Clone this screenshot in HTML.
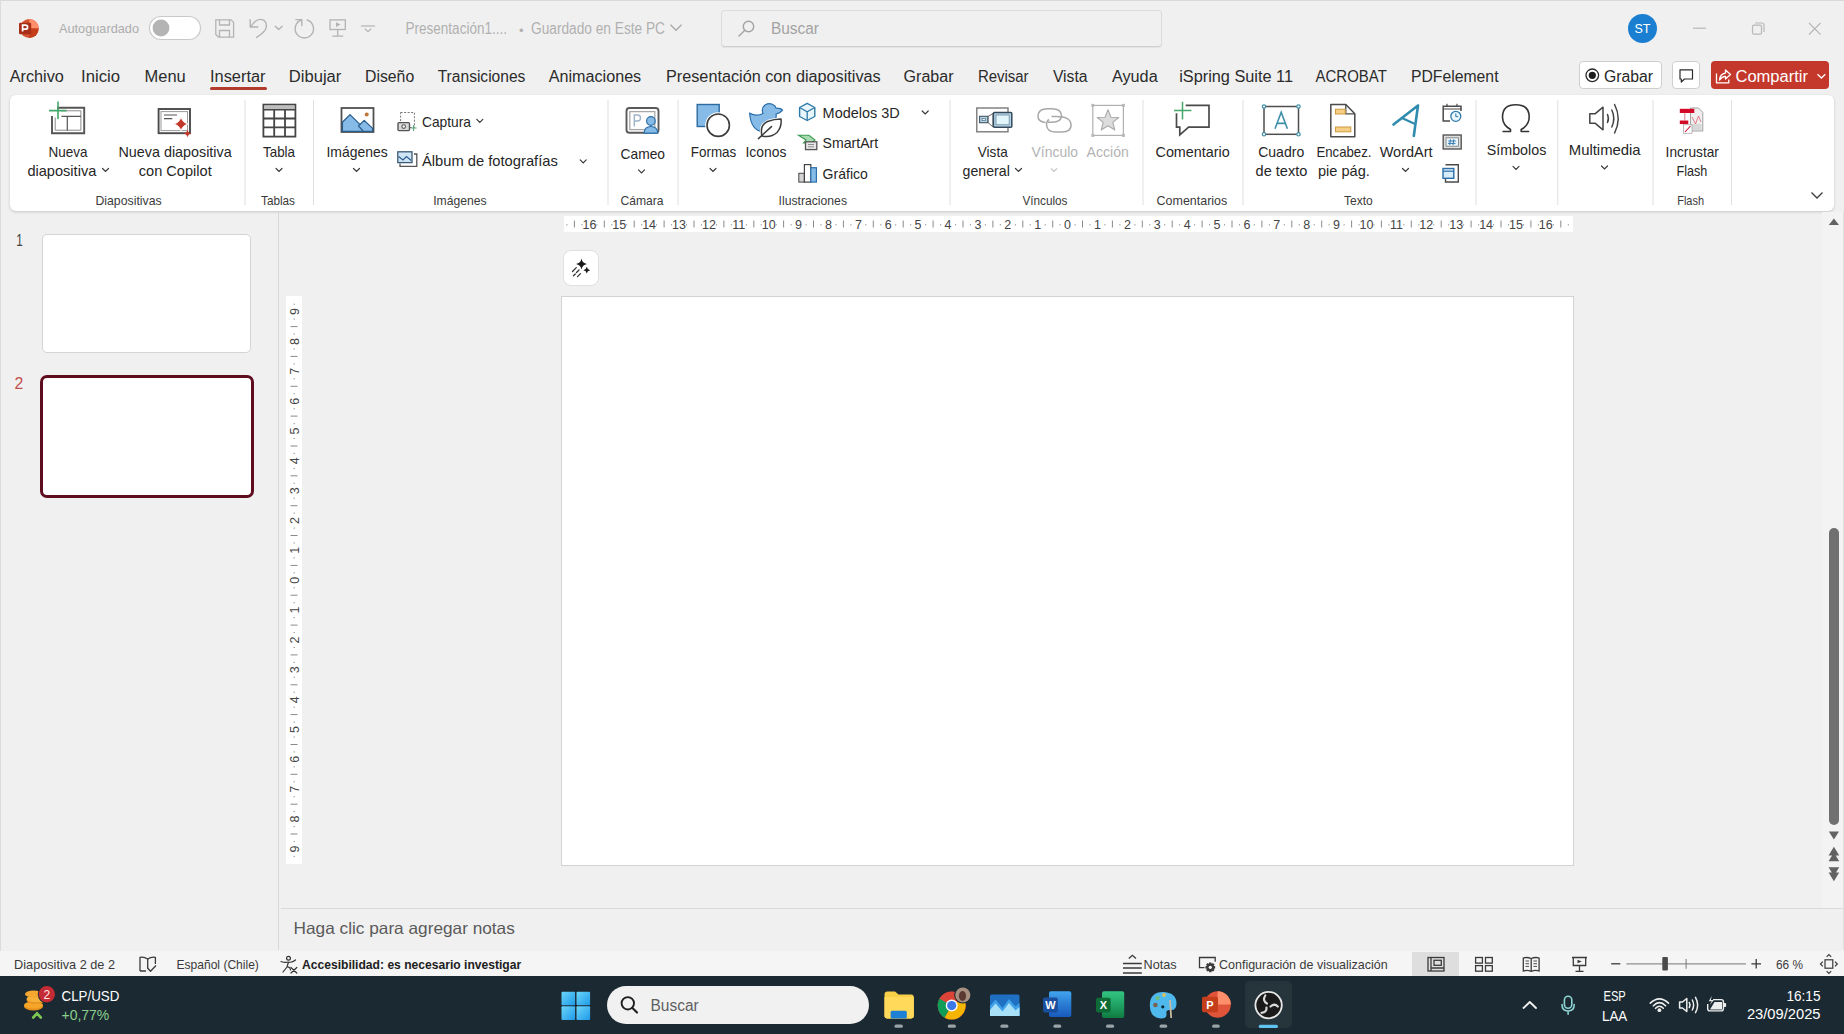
<!DOCTYPE html>
<html><head><meta charset="utf-8"><title>PowerPoint</title><style>
*{margin:0;padding:0;box-sizing:border-box}
html,body{width:1844px;height:1034px;overflow:hidden;background:#f0f0f0;font-family:"Liberation Sans",sans-serif}
.a{position:absolute}
#ov{position:absolute;left:0;top:0;width:1844px;height:1034px}
#ov text{font-family:"Liberation Sans",sans-serif}
</style></head>
<body>

<div class="a" style="left:0;top:0;width:1844px;height:1px;background:#d9d9d9"></div>
<div class="a" style="left:0;top:0;width:1px;height:976px;background:#dcdcdc"></div>
<div class="a" style="left:721px;top:10px;width:441px;height:37px;border:1px solid #dcdcdc;border-bottom-color:#cfcfcf;border-radius:4px;background:#f0f0f0;box-shadow:0 1px 1px rgba(0,0,0,.06)"></div>
<div class="a" style="left:1628px;top:14px;width:29px;height:29px;border-radius:50%;background:#1b7fd1"></div>
<div class="a" style="left:210px;top:87px;width:57px;height:3px;border-radius:2px;background:#b33b2e"></div>
<div class="a" style="left:1579px;top:61px;width:83px;height:28px;border:1px solid #cfcfcf;border-radius:4px;background:#fff"></div>
<div class="a" style="left:1672px;top:61px;width:28px;height:28px;border:1px solid #cfcfcf;border-radius:4px;background:#fff"></div>
<div class="a" style="left:1711px;top:61px;width:118px;height:28px;border-radius:4px;background:#c4382b"></div>
<div class="a" style="left:10px;top:95px;width:1824px;height:116px;border-radius:6px;background:#fff;box-shadow:0 1px 3px rgba(0,0,0,.18)"></div>
<div class="a" style="left:278px;top:212px;width:1px;height:738px;background:#d8d8d8"></div>
<div class="a" style="left:42px;top:234px;width:209px;height:119px;border:1px solid #d4d4d4;border-radius:5px;background:#fff"></div>
<div class="a" style="left:40px;top:375px;width:214px;height:123px;border:3px solid #5e0c1e;border-radius:7px;background:#fff"></div>
<div class="a" style="left:564px;top:216px;width:1009px;height:16px;background:#fff"></div>
<div class="a" style="left:286px;top:296px;width:16px;height:568px;background:#fff"></div>
<div class="a" style="left:563px;top:250px;width:36px;height:36px;border:1px solid #e0e0e0;border-radius:8px;background:#fff"></div>
<div class="a" style="left:561px;top:296px;width:1013px;height:570px;border:1px solid #d3d3d3;background:#fff"></div>
<div class="a" style="left:1822px;top:212px;width:21px;height:696px;background:#f3f3f3"></div>
<div class="a" style="left:1843px;top:212px;width:1px;height:738px;background:#e2e2e2"></div>
<div class="a" style="left:1829px;top:528px;width:10px;height:297px;border-radius:5px;background:#707070"></div>
<div class="a" style="left:281px;top:908px;width:1563px;height:1px;background:#dadada"></div>
<div class="a" style="left:0;top:951px;width:1844px;height:25px;background:#f5f5f5"></div>
<div class="a" style="left:1412px;top:952px;width:47px;height:24px;background:#dedede"></div>
<div class="a" style="left:0;top:976px;width:1844px;height:58px;background:#1b2a32"></div>
<div class="a" style="left:607px;top:986px;width:262px;height:38px;border-radius:19px;background:#f1f1f1"></div>
<div class="a" style="left:1245px;top:981px;width:47px;height:47px;border-radius:5px;background:#26343c"></div>

<svg id="ov" width="1844" height="1034" viewBox="0 0 1844 1034">

<!-- ppt logo -->
<circle cx="29.3" cy="28.5" r="9.4" fill="#d35230"/>
<path d="M29.3 19.1 A9.4 9.4 0 0 1 38.7 28.5 L29.3 28.5Z" fill="#ff8f6b"/>
<path d="M29.3 28.5 L38.7 28.5 A9.4 9.4 0 0 1 29.3 37.9Z" fill="#c43e1c"/>
<rect x="19" y="22.7" width="12.2" height="11.6" rx="1.2" fill="#a82e1a"/>
<path d="M22.6 31.6 V25.2 H25.4 Q27.6 25.2 27.6 27.2 Q27.6 29.2 25.4 29.2 H22.6" fill="none" stroke="#ffffff" stroke-width="1.7"/>
<!-- toggle -->
<rect x="149.5" y="16.5" width="51" height="23" rx="11.5" fill="#ffffff" stroke="#c9c9c9" stroke-width="1.2"/>
<circle cx="161" cy="28" r="8.4" fill="#b4b4b4"/>
<!-- save -->
<g fill="none" stroke="#b3b3b3" stroke-width="1.3">
<path d="M215.8 19.8 H231 L233.6 22.4 V37.2 H218.5 L215.8 34.5Z"/>
<path d="M219.5 19.8 V25 H229.5 V19.8"/>
<path d="M219.5 37.2 V30.5 H229.5 V37.2"/>
</g>
<!-- undo -->
<g fill="none" stroke="#b3b3b3" stroke-width="1.4" stroke-linecap="round" stroke-linejoin="round">
<path d="M250.2 19.8 V27 H257.8"/>
<path d="M250.8 26.6 Q255.5 19.3 260.5 19.4 Q266.4 19.8 266.4 26 Q266.4 31.5 256.5 37.4"/>
<path d="M275.2 26.2 L278.7 29.6 L282.2 26.2"/>
</g>
<!-- redo circle -->
<g fill="none" stroke="#b3b3b3" stroke-width="1.4" stroke-linecap="round" stroke-linejoin="round">
<path d="M301.5 20 A9.2 9.2 0 1 0 307.2 20"/>
<path d="M295.8 19.6 H301.8 V25.6"/>
</g>
<!-- present -->
<g fill="none" stroke="#b3b3b3" stroke-width="1.3">
<rect x="330" y="19.9" width="15.3" height="9.6" />
<path d="M337.7 29.5 V36 M332.3 36.2 H343.2"/>
</g>
<path d="M336 22.2 L340.5 24.6 L336 27Z" fill="#b3b3b3"/>
<!-- customize -->
<g fill="none" stroke="#b3b3b3" stroke-width="1.2">
<path d="M361 26 H375"/>
<path d="M364.8 28.6 L368 31.6 L371.2 28.6"/>
</g>
<!-- search icon -->
<g fill="none" stroke="#a3a3a3" stroke-width="1.4" stroke-linecap="round">
<circle cx="748.5" cy="26.5" r="5.2"/>
<path d="M744.8 30.3 L739 36"/>
</g>
<!-- title chevron -->
<path d="M670.5 24.8 L676 30.3 L681.5 24.8" fill="none" stroke="#a8a8a8" stroke-width="1.3"/>
<!-- window controls -->
<path d="M1693 28.2 H1706" stroke="#b8b8b8" stroke-width="1.2"/>
<g fill="none" stroke="#b8b8b8" stroke-width="1.2">
<rect x="1752.5" y="25.2" width="9" height="9" rx="1.5"/>
<path d="M1755 23 H1762 Q1764 23 1764 25 V32"/>
</g>
<path d="M1809 23 L1820.5 34.5 M1820.5 23 L1809 34.5" stroke="#b8b8b8" stroke-width="1.2"/>
<!-- grabar record -->
<circle cx="1592.3" cy="75.3" r="6.3" fill="none" stroke="#2b2b2b" stroke-width="1.3"/>
<circle cx="1592.3" cy="75.3" r="3.6" fill="#1e1e1e"/>
<!-- comment -->
<path d="M1680 69.8 H1692.5 V79 H1684.5 L1681.3 82 V79 H1680Z" fill="none" stroke="#2b2b2b" stroke-width="1.2" stroke-linejoin="round"/>
<!-- compartir icons -->
<g fill="none" stroke="#ffffff" stroke-width="1.3" stroke-linejoin="round">
<path d="M1716.5 73.5 V82.8 H1728.8 V79.5"/>
<path d="M1719.5 80 Q1720 74 1725.5 73 V70 L1730.5 74.5 L1725.5 79 V76.3 Q1722 76.5 1719.5 80Z"/>
<path d="M1817.5 74.2 L1821.4 78 L1825.3 74.2"/>
</g>

<!-- separators -->
<g fill="#e0e0e0">
<rect x="244.5" y="100" width="1" height="105"/>
<rect x="313" y="100" width="1" height="105"/>
<rect x="607.5" y="100" width="1" height="105"/>
<rect x="677.5" y="100" width="1" height="105"/>
<rect x="949.5" y="100" width="1" height="105"/>
<rect x="1142.5" y="100" width="1" height="105"/>
<rect x="1242.5" y="100" width="1" height="105"/>
<rect x="1475.5" y="100" width="1" height="105"/>
<rect x="1557.3" y="100" width="1" height="105"/>
<rect x="1652.5" y="100" width="1" height="105"/>
<rect x="1731" y="100" width="1" height="105"/>
</g>
<!-- chevrons (ribbon) -->
<g fill="none" stroke="#3a3a3a" stroke-width="1.2" stroke-linecap="round">
<path d="M102.5 168.5 L105.5 171.5 L108.5 168.5"/>
<path d="M276 168.5 L279 171.5 L282 168.5"/>
<path d="M353.5 168.5 L356.5 171.5 L359.5 168.5"/>
<path d="M476.8 119.3 L479.8 122.3 L482.8 119.3"/>
<path d="M580.2 159.8 L583.2 162.8 L586.2 159.8"/>
<path d="M638.5 169.8 L641.5 172.8 L644.5 169.8"/>
<path d="M710 168.5 L713 171.5 L716 168.5"/>
<path d="M922.2 111 L925.2 114 L928.2 111"/>
<path d="M1015.5 168.5 L1018.5 171.5 L1021.5 168.5"/>
<path d="M1402.5 168.5 L1405.5 171.5 L1408.5 168.5"/>
<path d="M1513 166.3 L1516 169.3 L1519 166.3"/>
<path d="M1601.5 166 L1604.5 169 L1607.5 166"/>
</g>
<path d="M1051 168.5 L1054 171.5 L1057 168.5" fill="none" stroke="#c4c4c4" stroke-width="1.2"/>
<path d="M1811.5 192.5 L1817 198 L1822.5 192.5" fill="none" stroke="#3a3a3a" stroke-width="1.3"/>

<!-- Nueva diapositiva -->
<g fill="none">
<path d="M58 109.6 V107.8 H84.2 V133.2 H52 V116" stroke="#555" stroke-width="1.9"/>
<path d="M61 110.8 H80.9 V130.2 H55.2 V117.5" stroke="#8a8a8a" stroke-width="1"/>
<path d="M61.5 116.4 H81 M67.3 116.4 V130.5" stroke="#555" stroke-width="1.2"/>
<path d="M58 101.5 V119 M49 110.6 H66.5" stroke="#44a86a" stroke-width="1.6"/>
</g>
<!-- Copilot new slide -->
<g fill="none">
<rect x="158.6" y="109" width="31.4" height="24.2" stroke="#4a4a4a" stroke-width="1.9"/>
<rect x="161" y="111.6" width="26.5" height="19" stroke="#9a9a9a" stroke-width="1"/>
<path d="M164 115 H177 M164 118.7 H172.3" stroke="#555" stroke-width="1.2"/>
</g>
<path d="M181 116.5 Q182.2 122.8 188.5 124 Q182.2 125.2 181 131.5 Q179.8 125.2 173.5 124 Q179.8 122.8 181 116.5Z" fill="#c0392b" stroke="#ffffff" stroke-width="0.9"/>
<path d="M187.5 129.6 Q188.1 133 191.5 133.6 Q188.1 134.2 187.5 137.6 Q186.9 134.2 183.5 133.6 Q186.9 133 187.5 129.6Z" fill="#c0392b"/>
<!-- Tabla -->
<g fill="none" stroke="#454545" stroke-width="1.8">
<rect x="263.4" y="104.6" width="32" height="32"/>
<path d="M263.4 109.6 H295.4 M263.4 118.5 H295.4 M263.4 127.3 H295.4 M274.2 109.6 V136.6 M285 109.6 V136.6"/>
</g>
<rect x="264.3" y="105.5" width="30.2" height="3.5" fill="#bdbdbd"/>
<!-- Imagenes -->
<rect x="341.5" y="108" width="32" height="24" fill="#ffffff" stroke="#505050" stroke-width="1.8"/>
<path d="M342.4 122.3 L350 114.6 L367 131.4 H342.4Z" fill="#86bbe8" stroke="#2b5d8c" stroke-width="1.3" stroke-linejoin="round"/>
<path d="M358.5 126 L364.2 120.4 L372.6 128.4 V131.4 H363.5Z" fill="#86bbe8" stroke="#2b5d8c" stroke-width="1.3" stroke-linejoin="round"/>
<circle cx="366.7" cy="114.6" r="2" fill="#c0773a"/>
<!-- Captura -->
<rect x="400.6" y="112.5" width="13.8" height="15" fill="none" stroke="#777" stroke-width="1" stroke-dasharray="2 1.5"/>
<rect x="398" y="122.6" width="11.5" height="8" rx="1" fill="#d9d9d9" stroke="#555" stroke-width="1.4"/>
<circle cx="403.7" cy="126.6" r="1.8" fill="#fff" stroke="#555" stroke-width="1.1"/>
<path d="M413.6 125 V131 M410.6 128 H416.6" stroke="#5aa67a" stroke-width="1.1"/>
<!-- Album -->
<path d="M400 163.5 V166.3 H416.8 V154 H414" fill="none" stroke="#555" stroke-width="1.3"/>
<rect x="397.8" y="151.8" width="14.2" height="10.8" fill="#cfe6f7" stroke="#3d5a74" stroke-width="1.3"/>
<path d="M398.6 156.5 L403 160 L406.5 156.5 L411.2 160.5" fill="none" stroke="#2b5d8c" stroke-width="1.2"/>
<!-- Cameo -->
<rect x="626.5" y="108" width="32" height="24.8" rx="3" fill="#fff" stroke="#5a5a5a" stroke-width="1.9"/>
<rect x="629.8" y="111.6" width="25" height="18" fill="#fff" stroke="#a8a8a8" stroke-width="1.3"/>
<path d="M634.3 126.5 V115 H637.5 Q640.5 115 640.5 118 Q640.5 121 637.5 121 H634.3" fill="none" stroke="#9fb3c8" stroke-width="1.4"/>
<circle cx="650.9" cy="121" r="4.3" fill="#86bbe8" stroke="#2b6fa8" stroke-width="1.2"/>
<path d="M644 133.2 Q644.5 126.5 650.9 126.5 Q657.3 126.5 657.8 133.2Z" fill="#86bbe8" stroke="#2b6fa8" stroke-width="1.2"/>
<!-- Formas -->
<rect x="697.2" y="104.5" width="22" height="22" fill="#86bbe8" stroke="#2c6aa0" stroke-width="1.4"/>
<circle cx="718.2" cy="125.2" r="13" fill="#ffffff"/>
<circle cx="718.2" cy="125.2" r="11.2" fill="#ffffff" stroke="#3c3c3c" stroke-width="1.6"/>
<!-- Iconos -->
<path d="M749.6 113 Q756 117 763 113.5 Q761 108 765 105 Q770.5 101.8 775 106 L776 108.2 Q781 108 782.5 110.2 Q780 113.5 776 114 Q777 118 774 121 L763 131.5 Q751 131 749.6 113Z" fill="#86bbe8" stroke="#2b6fa8" stroke-width="1.2" stroke-linejoin="round"/>
<path d="M762 136 Q759.5 125 767.5 121.5 Q774 119 781 119 Q782 127 777 132.5 Q771 138 762 136Z" fill="#ffffff" stroke="#ffffff" stroke-width="3"/>
<path d="M762 136 Q759.5 125 767.5 121.5 Q774 119 781 119 Q782 127 777 132.5 Q771 138 762 136Z" fill="#ffffff" stroke="#3c3c3c" stroke-width="1.5" stroke-linejoin="round"/>
<path d="M758.4 138.6 L771.5 126.6" stroke="#3c3c3c" stroke-width="1.5" stroke-linecap="round"/>
<!-- Modelos 3D -->
<g fill="#e8f5fb" stroke="#2e7aa6" stroke-width="1.4" stroke-linejoin="round">
<path d="M807.2 103.3 L814.8 107.5 V116.5 L807.2 120.5 L799.6 116.5 V107.5Z"/>
</g>
<path d="M799.6 107.5 L807.2 111.7 L814.8 107.5 M807.2 111.7 V120.5" fill="none" stroke="#2e7aa6" stroke-width="1.3"/>
<!-- SmartArt -->
<path d="M798.5 135.2 H809 L815 140 L811.5 143 H803.5 L806 140Z" fill="#a9dbb0" stroke="#3d9a55" stroke-width="1.1"/>
<rect x="805.5" y="141.8" width="11.3" height="7.8" fill="#e6e6e6" stroke="#555" stroke-width="1.3"/>
<path d="M808 144.5 H814 M808 146.8 H814" stroke="#777" stroke-width="0.8"/>
<!-- Grafico -->
<rect x="798.8" y="173.3" width="5.6" height="8.8" fill="#d4d4d4" stroke="#555" stroke-width="1.1"/>
<rect x="804.4" y="164.6" width="6.4" height="17.5" fill="#ffffff" stroke="#444" stroke-width="1.2"/>
<rect x="810.8" y="167.7" width="5.6" height="14.4" fill="#86bbe8" stroke="#2b6fa8" stroke-width="1.2"/>
<!-- Vista general -->
<rect x="976.8" y="108" width="31.2" height="23.8" fill="#fff" stroke="#7a7a7a" stroke-width="1.4"/>
<path d="M988 116.5 L993 113.5 V127 L988 122.5Z" fill="#fff" stroke="#666" stroke-width="1"/>
<rect x="979.6" y="116.3" width="8.2" height="6.4" fill="#b8d6ea" stroke="#3f5566" stroke-width="1.1"/>
<rect x="982" y="118.3" width="3.5" height="2.4" fill="#e6f2fa" stroke="#3f5566" stroke-width="0.6"/>
<rect x="993.4" y="112.6" width="18.4" height="14.6" rx="1" fill="#b8d6ea" stroke="#34495a" stroke-width="1.5"/>
<rect x="996" y="115" width="13.2" height="9.8" fill="#e3f6fc" stroke="#6a8aa0" stroke-width="0.8"/>
<!-- Vinculo (disabled) -->
<g fill="none" stroke="#a9a9a9" stroke-width="1.5">
<path d="M1045.5 122.5 Q1037.5 121.5 1038 115.5 Q1038.5 108.8 1047.5 108.8 H1052 Q1061 108.8 1061.5 115.5 Q1061.5 122.2 1052 122.2 H1048"/>
<path d="M1051.5 116.5 H1056.5 Q1070.5 116.5 1071 124.5 Q1071.5 132 1062 132 H1056 Q1047 132 1046.5 125 Q1046.5 121 1049 119.5"/>
</g>
<!-- Accion (disabled) -->
<rect x="1092.8" y="105.4" width="30.6" height="30" fill="none" stroke="#b0b0b0" stroke-width="1.2"/>
<g fill="#b8b8b8"><rect x="1091.3" y="103.9" width="3" height="3"/><rect x="1121.9" y="103.9" width="3" height="3"/><rect x="1091.3" y="133.9" width="3" height="3"/><rect x="1121.9" y="133.9" width="3" height="3"/></g>
<path d="M1108 109.8 L1111 117.2 L1118.8 117.5 L1112.8 122.4 L1114.8 130 L1108 125.8 L1101.2 130 L1103.2 122.4 L1097.2 117.5 L1105 117.2Z" fill="#dcdcdc" stroke="#ababab" stroke-width="1.1" stroke-linejoin="round"/>
<!-- Comentario -->
<path d="M1185.7 105.4 H1209 V127.2 H1188.6 L1179.8 134.8 V127.2 H1176.5 V113.2" fill="none" stroke="#4a4a4a" stroke-width="1.7" stroke-linejoin="miter"/>
<path d="M1182.5 101.8 V119.6 M1174 110.4 H1191.4" stroke="#45a86a" stroke-width="1.5"/>
<!-- Cuadro de texto -->
<rect x="1264" y="106.5" width="34.5" height="27.8" fill="#fff" stroke="#4e4e4e" stroke-width="1.5"/>
<g fill="#fff" stroke="#3e8fa8" stroke-width="1.2"><circle cx="1264" cy="106.5" r="1.7"/><circle cx="1298.5" cy="106.5" r="1.7"/><circle cx="1264" cy="134.3" r="1.7"/><circle cx="1298.5" cy="134.3" r="1.7"/></g>
<path d="M1275 128.8 L1281.2 112.3 L1287.4 128.8 M1277.2 123.4 H1285.2" fill="none" stroke="#3e8fa8" stroke-width="1.6"/>
<!-- Encabez -->
<path d="M1330.8 104.6 H1345.8 L1354.8 113.8 V136.8 H1330.8Z" fill="#fff" stroke="#4a4a4a" stroke-width="1.5" stroke-linejoin="round"/>
<path d="M1345.8 104.6 V113.8 H1354.8" fill="none" stroke="#4a4a4a" stroke-width="1.3"/>
<rect x="1335.5" y="109.2" width="9.7" height="4.8" fill="#f6cf86" stroke="#cf9b3e" stroke-width="1"/>
<rect x="1335.5" y="127" width="15.3" height="4.8" fill="#f6cf86" stroke="#cf9b3e" stroke-width="1"/>
<!-- WordArt -->
<path d="M1393.5 124.5 L1418 105.5 L1413.8 136" fill="none" stroke="#2f8cae" stroke-width="2.6" stroke-linecap="round" stroke-linejoin="round"/>
<path d="M1402 118 L1414.4 123.8" fill="none" stroke="#2f8cae" stroke-width="2.2"/>
<!-- date/time -->
<path d="M1450 121 H1443.2 V106.3 H1461 V111" fill="none" stroke="#4a4a4a" stroke-width="1.5"/>
<path d="M1443.2 109 H1461 M1447 103.8 V107 M1457 103.8 V107" stroke="#4a4a4a" stroke-width="1.2"/>
<circle cx="1455.8" cy="116.3" r="5" fill="#e8f5fb" stroke="#2e7aa6" stroke-width="1.3"/>
<path d="M1455.8 113.5 V116.6 H1458.2" fill="none" stroke="#2e7aa6" stroke-width="1"/>
<!-- slide number -->
<rect x="1443.2" y="135" width="18" height="14" fill="#dedede" stroke="#555" stroke-width="1.4"/>
<rect x="1446" y="137.8" width="12.4" height="8.4" fill="#e6f4fb" stroke="#777" stroke-width="0.8"/>
<path d="M1450.5 139.3 L1449.7 145 M1453.8 139.3 L1453 145 M1448.3 141 H1455.8 M1448 143.4 H1455.5" stroke="#2b6fa8" stroke-width="0.9"/>
<!-- object -->
<path d="M1445.5 164.8 H1458.3 V182 H1445.5 V177" fill="none" stroke="#4a4a4a" stroke-width="1.4"/>
<rect x="1443" y="168.5" width="10.8" height="9.8" fill="#d6ecfa" stroke="#2b6fa8" stroke-width="1.4"/>
<path d="M1443 171.2 H1453.8" stroke="#2b6fa8" stroke-width="1.2"/>
<!-- Omega -->
<path d="M1502.5 131.5 H1510.5 V129.5 Q1502.5 125 1502.5 117 Q1502.5 104.8 1515.8 104.8 Q1529.2 104.8 1529.2 117 Q1529.2 125 1521.2 129.5 V131.5 H1529.2" fill="none" stroke="#333" stroke-width="1.6" stroke-linejoin="round"/>
<!-- Multimedia speaker -->
<path d="M1589.8 113.8 H1595 L1603 107.2 V129.8 L1595 123.2 H1589.8Z" fill="none" stroke="#444" stroke-width="1.5" stroke-linejoin="round"/>
<path d="M1607.5 114.5 Q1609.3 118.5 1607.5 122.5 M1611.8 110 Q1615.8 118.5 1611.8 127 M1614.6 104.5 Q1621.8 118.5 1614.6 133" fill="none" stroke="#444" stroke-width="1.5" stroke-linecap="round"/>
<!-- Flash icon -->
<path d="M1690.5 108 H1698.5 L1702.8 112.3 V131 H1690.5Z" fill="#efefef" stroke="#999" stroke-width="0.9"/>
<path d="M1692 117 L1695.5 124 L1698.5 116 L1701 122" fill="none" stroke="#e06070" stroke-width="0.8"/>
<rect x="1691" y="124" width="10.5" height="6" fill="#d8d8d8"/>
<rect x="1679.8" y="108.8" width="14.5" height="4.2" fill="#d20a28"/>
<rect x="1679.8" y="120.5" width="8.5" height="3.6" fill="#d20a28"/>
<path d="M1684.8 113 V120.5" stroke="#c05060" stroke-width="0.7"/>
<rect x="1683.5" y="124.8" width="8.5" height="8.5" fill="#fff" stroke="#a0a0a0" stroke-width="0.7"/>
<path d="M1685 132 L1690.5 126" stroke="#d20a28" stroke-width="1.1"/>

<!-- designer sparkles -->
<path d="M581.5 258.5 Q582.3 263.2 587 264 Q582.3 264.8 581.5 269.5 Q580.7 264.8 576 264 Q580.7 263.2 581.5 258.5Z" fill="#1a1a1a"/>
<path d="M586.8 266.8 Q587.3 269.7 590.2 270.2 Q587.3 270.7 586.8 273.6 Q586.3 270.7 583.4 270.2 Q586.3 269.7 586.8 266.8Z" fill="#1a1a1a"/>
<g stroke="#333" stroke-width="1.3" stroke-linecap="round">
<path d="M572.5 271.5 L576.3 267.6 M576.5 272.5 L579 270 M573.5 275.8 L575.3 274 M577.5 276.6 L580.5 273.6"/>
</g>
<!-- scrollbar arrows -->
<g fill="#626262">
<path d="M1828.8 225 L1833.9 218.5 L1839 225Z"/>
<path d="M1828.8 831.6 H1839 L1833.9 839.4Z"/>
<path d="M1833.9 846.7 L1839.2 855.6 H1828.6Z M1833.9 852.4 L1839.2 861.3 H1828.6Z"/>
<path d="M1828.6 867.2 H1839.2 L1833.9 876.1Z M1828.6 872.5 H1839.2 L1833.9 881.3Z"/>
</g>
<!-- status bar icons -->
<g fill="none" stroke="#3a3a3a" stroke-width="1.3" stroke-linejoin="round">
<path d="M140 971 V957.3 Q144 956.5 147.7 959 Q151.4 956.5 155.4 957.3 V964"/>
<path d="M147.7 959 V968.5 M140 971 H146"/>
<path d="M147.5 968 L150.5 971.3 L156 965.5"/>
</g>
<g fill="none" stroke="#333" stroke-width="1.2" stroke-linecap="round" stroke-linejoin="round">
<circle cx="288.5" cy="958.3" r="1.9"/>
<path d="M281 961.5 Q285 963 288.5 962 Q292 963 295.5 960 M288.5 962 L287 967 L283 972 M287 967 Q290 966.5 290.5 970"/>
<path d="M291 967.5 L296.8 973 M296.8 967.5 L291 973"/>
</g>
<g fill="none" stroke="#3a3a3a" stroke-width="1.3">
<path d="M1128.8 958.6 L1132.4 955.3 L1136 958.6" />
<path d="M1123 963.5 H1141.8 M1123 968 H1141.8 M1123 973 H1141.8"/>
</g>
<path d="M1204.5 967.6 H1199.5 V957.5 H1215.2 V961.8" fill="none" stroke="#3a3a3a" stroke-width="1.3"/>
<path d="M1215.18 966.21 L1215.18 968.39 L1213.59 968.77 L1213.66 968.59 L1214.52 969.98 L1212.98 971.52 L1211.59 970.66 L1211.77 970.59 L1211.39 972.18 L1209.21 972.18 L1208.83 970.59 L1209.01 970.66 L1207.62 971.52 L1206.08 969.98 L1206.94 968.59 L1207.01 968.77 L1205.42 968.39 L1205.42 966.21 L1207.01 965.83 L1206.94 966.01 L1206.08 964.62 L1207.62 963.08 L1209.01 963.94 L1208.83 964.01 L1209.21 962.42 L1211.39 962.42 L1211.77 964.01 L1211.59 963.94 L1212.98 963.08 L1214.52 964.62 L1213.66 966.01 L1213.59 965.83Z" fill="#3a3a3a"/>
<circle cx="1210.3" cy="967.3" r="1.6" fill="#f5f5f5"/>
<!-- view buttons -->
<g fill="none" stroke="#3a3a3a" stroke-width="1.3">
<rect x="1428" y="957.5" width="16" height="13.5"/>
<path d="M1431 957.5 V971 M1431 968 H1444"/>
<rect x="1434" y="960.3" width="7.3" height="5"/>
<rect x="1475.6" y="957.5" width="6.8" height="5.6"/><rect x="1485.5" y="957.5" width="6.8" height="5.6"/>
<rect x="1475.6" y="965.6" width="6.8" height="5.6"/><rect x="1485.5" y="965.6" width="6.8" height="5.6"/>
<path d="M1523.3 958 Q1527 956.8 1531.2 958.5 Q1535.4 956.8 1539.1 958 V971 Q1535.4 969.8 1531.2 971.3 Q1527 969.8 1523.3 971Z M1531.2 958.5 V971.3"/>
<path d="M1525.5 961 H1529 M1525.5 963.7 H1529 M1525.5 966.4 H1529 M1533.4 961 H1537 M1533.4 963.7 H1537 M1533.4 966.4 H1537" stroke-width="0.9"/>
<path d="M1572 957.5 H1587 M1573.3 957.5 V965.5 H1585.7 V957.5 M1579.5 965.5 V971 M1575.5 971.3 H1583.5"/>
</g>
<path d="M1577.5 959.8 L1581.8 961.5 L1577.5 963.3Z" fill="#3a3a3a"/>
<!-- zoom slider -->
<path d="M1611.2 963.8 H1620.3" stroke="#3a3a3a" stroke-width="1.3"/>
<rect x="1626.4" y="963.4" width="119.6" height="1" fill="#777"/>
<rect x="1685.6" y="959" width="1" height="9.8" fill="#777"/>
<rect x="1662.3" y="957" width="5.6" height="13.6" rx="1" fill="#4a4a4a"/>
<path d="M1751.4 963.8 H1761 M1756.2 959 V968.6" stroke="#3a3a3a" stroke-width="1.3"/>
<g fill="none" stroke="#3a3a3a" stroke-width="1.2">
<rect x="1825" y="959.8" width="7.8" height="8.4"/>
<path d="M1826.6 956.8 L1828.9 954.5 L1831.2 956.8 M1826.6 971.2 L1828.9 973.5 L1831.2 971.2 M1822.8 961.7 L1820.5 964 L1822.8 966.3 M1835 961.7 L1837.3 964 L1835 966.3"/>
</g>
<!-- taskbar: coins widget -->
<ellipse cx="33.5" cy="1006.5" rx="9.5" ry="4" fill="#e8901e"/>
<ellipse cx="33.5" cy="1005" rx="9.5" ry="3.6" fill="#f5a52a"/>
<ellipse cx="36" cy="1000" rx="9.5" ry="3.8" fill="#e8901e"/>
<ellipse cx="36" cy="998.8" rx="9.5" ry="3.4" fill="#f7b03a"/>
<ellipse cx="33.5" cy="994" rx="8.5" ry="3.6" fill="#f5a830"/>
<path d="M33.2 1017.5 L37 1013.5 L40.8 1017.5" fill="none" stroke="#7cc850" stroke-width="2.6" stroke-linecap="round"/>
<circle cx="46.8" cy="994.3" r="9" fill="#1b2a32"/>
<circle cx="46.8" cy="994.3" r="8.2" fill="#c42b35"/>
<text x="46.8" y="998.8" font-size="12" fill="#ffe8e8" text-anchor="middle">2</text>
<!-- windows logo -->
<defs>
<linearGradient id="wg" x1="0" y1="0" x2="1" y2="1"><stop offset="0" stop-color="#6bd6fb"/><stop offset="1" stop-color="#1f9ae8"/></linearGradient>
<linearGradient id="wordg" x1="0" y1="0" x2="0" y2="1"><stop offset="0" stop-color="#41a5ee"/><stop offset=".5" stop-color="#2b7cd3"/><stop offset="1" stop-color="#185abd"/></linearGradient>
<linearGradient id="xlg" x1="0" y1="0" x2="0" y2="1"><stop offset="0" stop-color="#33c481"/><stop offset=".5" stop-color="#21a366"/><stop offset="1" stop-color="#107c41"/></linearGradient>
</defs>
<g fill="url(#wg)">
<rect x="561.5" y="991.7" width="13.6" height="13.6" rx="1"/>
<rect x="576.5" y="991.7" width="13.6" height="13.6" rx="1"/>
<rect x="561.5" y="1006.3" width="13.6" height="13.6" rx="1"/>
<rect x="576.5" y="1006.3" width="13.6" height="13.6" rx="1"/>
</g>
<!-- search icon -->
<circle cx="627.8" cy="1003.3" r="6.2" fill="none" stroke="#1e1e1e" stroke-width="1.9"/>
<path d="M632.2 1007.8 L637 1012.6" stroke="#1e1e1e" stroke-width="2.1" stroke-linecap="round"/>
<!-- folder -->
<path d="M884.5 994.5 Q884.5 991.5 887.5 991.5 H895 L898.5 994.5 H911 Q913.8 994.5 913.8 997.3 V1016 Q913.8 1018.4 911.3 1018.4 H887 Q884.5 1018.4 884.5 1016Z" fill="#f9cf4a"/>
<path d="M884.5 997 H913.8 V1016 Q913.8 1018.4 911.3 1018.4 H887 Q884.5 1018.4 884.5 1016Z" fill="#ffd95a"/>
<rect x="890.6" y="1010.8" width="16.2" height="7.6" rx="1.5" fill="#1e80d4"/>
<!-- chrome -->
<circle cx="951.7" cy="1005.6" r="14" fill="#db4437"/>
<path d="M951.7 1005.6 L939.6 998.6 A14 14 0 0 0 944.7 1017.7Z" fill="#0f9d58"/>
<path d="M951.7 1005.6 L944.7 1017.7 A14 14 0 0 0 965.7 1005.6 A14 14 0 0 0 963.8 998.6Z" fill="#f4b400"/>
<path d="M951.7 1005.6 L963.8 998.6 A14 14 0 0 0 939.6 998.6Z" fill="#db4437"/>
<circle cx="951.7" cy="1005.6" r="6" fill="#ffffff"/>
<circle cx="951.7" cy="1005.6" r="4.6" fill="#3b78e7"/>
<circle cx="962.8" cy="995" r="8.6" fill="#1b2a32"/>
<circle cx="962.8" cy="995" r="7.6" fill="#a89080"/>
<ellipse cx="962.5" cy="996" rx="3.6" ry="5" fill="#5a3a30"/>
<!-- resource monitor-like app -->
<rect x="990" y="994.5" width="29.5" height="21.6" rx="1.5" fill="#1f6fc2"/>
<path d="M990 1016.1 V1006 L995.5 999.5 L1002.5 1008 L1009 999 L1015.5 1006.5 L1019.5 1003 V1016.1Z" fill="#3fa0e8"/>
<path d="M990 1016.1 V1010 L995.5 1003.5 L1002.5 1011.5 L1009 1003 L1015.5 1010.5 L1019.5 1007 V1016.1Z" fill="#a8e0f8"/>
<!-- word -->
<rect x="1049" y="991.3" width="22.3" height="25.8" rx="2" fill="url(#wordg)"/>
<rect x="1043" y="997.6" width="14.8" height="14.8" rx="1.8" fill="#1a4f9e"/>
<text x="1050.4" y="1009" font-size="11" font-weight="700" fill="#ffffff" text-anchor="middle">W</text>
<!-- excel -->
<rect x="1102" y="991.3" width="22.2" height="26.6" rx="2" fill="url(#xlg)"/>
<rect x="1096" y="997.8" width="14.6" height="14.6" rx="1.8" fill="#0e6b36"/>
<text x="1103.3" y="1009.2" font-size="11" font-weight="700" fill="#ffffff" text-anchor="middle">X</text>
<!-- paint -->
<path d="M1163 992 Q1176.5 992.5 1176.5 1003.5 Q1176.5 1011 1170 1010 Q1165.5 1009.6 1166.5 1014 Q1167 1018.5 1161 1018.5 Q1150 1018 1149.8 1005.5 Q1149.8 992 1163 992Z" fill="#4fb8ec"/>
<circle cx="1155.4" cy="1005" r="2.3" fill="#7a6050"/>
<circle cx="1157.6" cy="998" r="2.1" fill="#6ac27a"/>
<circle cx="1164" cy="995" r="1.9" fill="#d8c060"/>
<circle cx="1162.8" cy="1006.8" r="1.6" fill="#0d2a3a"/>
<path d="M1170 1000 L1171.2 1018" stroke="#c8b8a0" stroke-width="1.8"/>
<!-- powerpoint -->
<circle cx="1217.6" cy="1004.5" r="13.2" fill="#e0543a"/>
<path d="M1217.6 991.3 A13.2 13.2 0 0 1 1230.8 1004.5 H1217.6Z" fill="#ff8f6b"/>
<rect x="1202" y="996.8" width="16" height="15.4" rx="1.8" fill="#c43e1c"/>
<text x="1210" y="1008.8" font-size="11" font-weight="700" fill="#ffffff" text-anchor="middle">P</text>
<!-- obs -->
<circle cx="1268.6" cy="1005.1" r="13.2" fill="#1a1a1a" stroke="#e8e8e8" stroke-width="1.8"/>
<g fill="none" stroke="#d8d8d8" stroke-width="2.2" stroke-linecap="round">
<path d="M1265.3 995.5 Q1262 1000.5 1267 1003.5"/>
<path d="M1277.8 1006.5 Q1274.5 1003 1270.5 1006.5"/>
<path d="M1261.5 1012.8 Q1267 1012.5 1266.5 1007.5"/>
</g>
<!-- indicators -->
<g fill="#9aa3a8">
<rect x="894.5" y="1024.6" width="8.4" height="3.2" rx="1.6"/>
<rect x="947.8" y="1024.6" width="8.1" height="3.2" rx="1.6"/>
<rect x="1000.4" y="1024.6" width="8" height="3.2" rx="1.6"/>
<rect x="1053.4" y="1024.6" width="7.8" height="3.2" rx="1.6"/>
<rect x="1106" y="1024.6" width="8.1" height="3.2" rx="1.6"/>
<rect x="1159.6" y="1024.6" width="7.6" height="3.2" rx="1.6"/>
<rect x="1212.1" y="1024.6" width="7.6" height="3.2" rx="1.6"/>
</g>
<rect x="1258.7" y="1024.8" width="19.3" height="3.3" rx="1.6" fill="#5fc3ef"/>
<!-- tray -->
<path d="M1523.5 1008 L1529.8 1002 L1536 1008" fill="none" stroke="#f2f2f2" stroke-width="1.8" stroke-linecap="round" stroke-linejoin="round"/>
<g fill="none" stroke="#8fd3d3" stroke-width="1.6" stroke-linecap="round">
<rect x="1564.4" y="996.2" width="7.4" height="12" rx="3.7"/>
<path d="M1562 1004.5 Q1562 1011 1568.1 1011 Q1574.2 1011 1574.2 1004.5 M1568.1 1011 V1014.3"/>
</g>
<g fill="none" stroke="#eeeeee" stroke-width="1.6" stroke-linecap="round">
<path d="M1650.3 1003.2 Q1659.4 994.5 1668.5 1003.2"/>
<path d="M1653.4 1005.8 Q1659.4 999.5 1665.6 1005.8"/>
<path d="M1655.6 1008.3 Q1659.4 1004.3 1663.3 1008.3"/>
</g>
<circle cx="1659.4" cy="1010.2" r="1.9" fill="#eeeeee"/>
<g fill="none" stroke="#eeeeee" stroke-width="1.5" stroke-linejoin="round" stroke-linecap="round">
<path d="M1679.6 1002 H1682.5 L1686.8 998.5 V1011.5 L1682.5 1008 H1679.6Z"/>
<path d="M1689.3 1002.5 Q1690.8 1005 1689.3 1007.5 M1692.3 1000 Q1695 1005 1692.3 1010 M1695.5 997.3 Q1699.8 1005 1695.5 1012.7"/>
</g>
<g fill="none" stroke="#eeeeee" stroke-width="1.4" stroke-linejoin="round">
<path d="M1713 999.6 H1721.3 Q1723.4 999.6 1723.4 1001.7 V1008.8 Q1723.4 1010.9 1721.3 1010.9 H1709.8 Q1707.7 1010.9 1707.7 1008.8 V1004"/>
</g>
<rect x="1723.5" y="1003" width="2.6" height="4" rx="0.8" fill="#eeeeee"/>
<path d="M1710 1009.4 L1714.5 1002 H1722 V1009.4Z" fill="#eeeeee"/>
<path d="M1711.8 995.8 L1708.8 1001.3 H1711.8 L1709.6 1005.6 L1713.8 1000 H1710.8 Z" fill="#eeeeee"/>
<text x="59.0" y="33.0" font-size="13.5" fill="#adadad" textLength="80.0" lengthAdjust="spacingAndGlyphs">Autoguardado</text>
<text x="405.5" y="34.3" font-size="16" fill="#b0b0b0" textLength="101.5" lengthAdjust="spacingAndGlyphs">Presentación1....</text>
<text x="519.0" y="34.5" font-size="13" fill="#b0b0b0">•</text>
<text x="531.0" y="34.3" font-size="16" fill="#b0b0b0" textLength="134.0" lengthAdjust="spacingAndGlyphs">Guardado en Este PC</text>
<text x="771.0" y="34.0" font-size="16" fill="#a3a3a3" textLength="48.0" lengthAdjust="spacingAndGlyphs">Buscar</text>
<text x="1634.5" y="33.0" font-size="12" fill="#ffffff" textLength="16.0" lengthAdjust="spacingAndGlyphs">ST</text>
<text x="9.7" y="82.0" font-size="16" fill="#2b2b2b" textLength="54.2" lengthAdjust="spacingAndGlyphs">Archivo</text>
<text x="81.0" y="82.0" font-size="16" fill="#2b2b2b" textLength="39.0" lengthAdjust="spacingAndGlyphs">Inicio</text>
<text x="144.5" y="82.0" font-size="16" fill="#2b2b2b" textLength="41.2" lengthAdjust="spacingAndGlyphs">Menu</text>
<text x="210.0" y="82.0" font-size="16" fill="#2b2b2b" textLength="55.5" lengthAdjust="spacingAndGlyphs">Insertar</text>
<text x="288.8" y="82.0" font-size="16" fill="#2b2b2b" textLength="52.5" lengthAdjust="spacingAndGlyphs">Dibujar</text>
<text x="365.0" y="82.0" font-size="16" fill="#2b2b2b" textLength="49.2" lengthAdjust="spacingAndGlyphs">Diseño</text>
<text x="437.7" y="82.0" font-size="16" fill="#2b2b2b" textLength="87.7" lengthAdjust="spacingAndGlyphs">Transiciones</text>
<text x="548.8" y="82.0" font-size="16" fill="#2b2b2b" textLength="92.4" lengthAdjust="spacingAndGlyphs">Animaciones</text>
<text x="666.0" y="82.0" font-size="16" fill="#2b2b2b" textLength="214.7" lengthAdjust="spacingAndGlyphs">Presentación con diapositivas</text>
<text x="903.6" y="82.0" font-size="16" fill="#2b2b2b" textLength="50.0" lengthAdjust="spacingAndGlyphs">Grabar</text>
<text x="977.9" y="82.0" font-size="16" fill="#2b2b2b" textLength="50.7" lengthAdjust="spacingAndGlyphs">Revisar</text>
<text x="1052.9" y="82.0" font-size="16" fill="#2b2b2b" textLength="34.7" lengthAdjust="spacingAndGlyphs">Vista</text>
<text x="1111.9" y="82.0" font-size="16" fill="#2b2b2b" textLength="45.8" lengthAdjust="spacingAndGlyphs">Ayuda</text>
<text x="1179.2" y="82.0" font-size="16" fill="#2b2b2b" textLength="113.8" lengthAdjust="spacingAndGlyphs">iSpring Suite 11</text>
<text x="1315.6" y="82.0" font-size="16" fill="#2b2b2b" textLength="71.2" lengthAdjust="spacingAndGlyphs">ACROBAT</text>
<text x="1411.0" y="82.0" font-size="16" fill="#2b2b2b" textLength="87.5" lengthAdjust="spacingAndGlyphs">PDFelement</text>
<text x="1604.0" y="82.0" font-size="16" fill="#262626" textLength="49.0" lengthAdjust="spacingAndGlyphs">Grabar</text>
<text x="1735.5" y="82.0" font-size="16" fill="#ffffff" textLength="72.5" lengthAdjust="spacingAndGlyphs">Compartir</text>
<text x="48.6" y="156.8" font-size="14.8" fill="#262626" textLength="39.0" lengthAdjust="spacingAndGlyphs">Nueva</text>
<text x="27.4" y="175.9" font-size="14.8" fill="#262626" textLength="68.9" lengthAdjust="spacingAndGlyphs">diapositiva</text>
<text x="118.5" y="156.8" font-size="14.8" fill="#262626" textLength="113.2" lengthAdjust="spacingAndGlyphs">Nueva diapositiva</text>
<text x="138.8" y="175.9" font-size="14.8" fill="#262626" textLength="72.9" lengthAdjust="spacingAndGlyphs">con Copilot</text>
<text x="95.4" y="204.5" font-size="12.8" fill="#3b3b3b" textLength="66.3" lengthAdjust="spacingAndGlyphs">Diapositivas</text>
<text x="263.0" y="156.8" font-size="14.8" fill="#262626" textLength="32.0" lengthAdjust="spacingAndGlyphs">Tabla</text>
<text x="261.0" y="204.5" font-size="12.8" fill="#3b3b3b" textLength="34.0" lengthAdjust="spacingAndGlyphs">Tablas</text>
<text x="326.5" y="156.8" font-size="14.8" fill="#262626" textLength="61.2" lengthAdjust="spacingAndGlyphs">Imágenes</text>
<text x="422.0" y="127.3" font-size="14.8" fill="#262626" textLength="49.0" lengthAdjust="spacingAndGlyphs">Captura</text>
<text x="422.0" y="165.8" font-size="14.8" fill="#262626" textLength="135.8" lengthAdjust="spacingAndGlyphs">Álbum de fotografías</text>
<text x="433.2" y="204.5" font-size="12.8" fill="#3b3b3b" textLength="53.5" lengthAdjust="spacingAndGlyphs">Imágenes</text>
<text x="620.5" y="158.7" font-size="14.8" fill="#262626" textLength="44.5" lengthAdjust="spacingAndGlyphs">Cameo</text>
<text x="620.5" y="204.5" font-size="12.8" fill="#3b3b3b" textLength="43.0" lengthAdjust="spacingAndGlyphs">Cámara</text>
<text x="690.8" y="156.8" font-size="14.8" fill="#262626" textLength="45.5" lengthAdjust="spacingAndGlyphs">Formas</text>
<text x="745.5" y="156.8" font-size="14.8" fill="#262626" textLength="40.9" lengthAdjust="spacingAndGlyphs">Iconos</text>
<text x="822.6" y="117.7" font-size="14.8" fill="#262626" textLength="77.1" lengthAdjust="spacingAndGlyphs">Modelos 3D</text>
<text x="822.6" y="148.2" font-size="14.8" fill="#262626" textLength="55.6" lengthAdjust="spacingAndGlyphs">SmartArt</text>
<text x="822.6" y="178.8" font-size="14.8" fill="#262626" textLength="45.3" lengthAdjust="spacingAndGlyphs">Gráfico</text>
<text x="778.6" y="204.5" font-size="12.8" fill="#3b3b3b" textLength="68.4" lengthAdjust="spacingAndGlyphs">Ilustraciones</text>
<text x="977.8" y="156.8" font-size="14.8" fill="#262626" textLength="29.9" lengthAdjust="spacingAndGlyphs">Vista</text>
<text x="962.6" y="175.9" font-size="14.8" fill="#262626" textLength="47.2" lengthAdjust="spacingAndGlyphs">general</text>
<text x="1031.6" y="156.8" font-size="14.8" fill="#b3b3b3" textLength="46.4" lengthAdjust="spacingAndGlyphs">Vínculo</text>
<text x="1086.6" y="156.8" font-size="14.8" fill="#b3b3b3" textLength="42.2" lengthAdjust="spacingAndGlyphs">Acción</text>
<text x="1022.4" y="204.5" font-size="12.8" fill="#3b3b3b" textLength="45.1" lengthAdjust="spacingAndGlyphs">Vínculos</text>
<text x="1155.5" y="156.8" font-size="14.8" fill="#262626" textLength="74.3" lengthAdjust="spacingAndGlyphs">Comentario</text>
<text x="1156.6" y="204.5" font-size="12.8" fill="#3b3b3b" textLength="70.6" lengthAdjust="spacingAndGlyphs">Comentarios</text>
<text x="1258.2" y="156.8" font-size="14.8" fill="#262626" textLength="46.0" lengthAdjust="spacingAndGlyphs">Cuadro</text>
<text x="1255.6" y="175.9" font-size="14.8" fill="#262626" textLength="51.7" lengthAdjust="spacingAndGlyphs">de texto</text>
<text x="1316.4" y="156.8" font-size="14.8" fill="#262626" textLength="55.1" lengthAdjust="spacingAndGlyphs">Encabez.</text>
<text x="1318.0" y="175.9" font-size="14.8" fill="#262626" textLength="51.8" lengthAdjust="spacingAndGlyphs">pie pág.</text>
<text x="1379.7" y="156.8" font-size="14.8" fill="#262626" textLength="52.9" lengthAdjust="spacingAndGlyphs">WordArt</text>
<text x="1344.0" y="204.5" font-size="12.8" fill="#3b3b3b" textLength="28.8" lengthAdjust="spacingAndGlyphs">Texto</text>
<text x="1486.8" y="154.6" font-size="14.8" fill="#262626" textLength="59.5" lengthAdjust="spacingAndGlyphs">Símbolos</text>
<text x="1568.8" y="155.1" font-size="14.8" fill="#262626" textLength="71.8" lengthAdjust="spacingAndGlyphs">Multimedia</text>
<text x="1665.6" y="156.8" font-size="14.8" fill="#262626" textLength="53.3" lengthAdjust="spacingAndGlyphs">Incrustar</text>
<text x="1676.5" y="175.7" font-size="14.8" fill="#262626" textLength="30.8" lengthAdjust="spacingAndGlyphs">Flash</text>
<text x="1677.2" y="204.5" font-size="12.8" fill="#3b3b3b" textLength="26.8" lengthAdjust="spacingAndGlyphs">Flash</text>
<text x="16.3" y="246.4" font-size="16" fill="#444444" textLength="6.5" lengthAdjust="spacingAndGlyphs">1</text>
<text x="14.6" y="389.0" font-size="16" fill="#c0504d" textLength="8.8" lengthAdjust="spacingAndGlyphs">2</text>
<text x="293.6" y="934.2" font-size="16.5" fill="#5a5a5a" textLength="221.2" lengthAdjust="spacingAndGlyphs">Haga clic para agregar notas</text>
<text x="14.1" y="968.9" font-size="12.8" fill="#3a3a3a" textLength="100.9" lengthAdjust="spacingAndGlyphs">Diapositiva 2 de 2</text>
<text x="176.5" y="968.9" font-size="12.8" fill="#3a3a3a" textLength="82.4" lengthAdjust="spacingAndGlyphs">Español (Chile)</text>
<text x="302.0" y="968.7" font-size="12.8" fill="#202020" font-weight="700" textLength="219.2" lengthAdjust="spacingAndGlyphs">Accesibilidad: es necesario investigar</text>
<text x="1143.6" y="968.7" font-size="12.8" fill="#3a3a3a" textLength="33.1" lengthAdjust="spacingAndGlyphs">Notas</text>
<text x="1219.0" y="968.7" font-size="12.8" fill="#3a3a3a" textLength="168.7" lengthAdjust="spacingAndGlyphs">Configuración de visualización</text>
<text x="1776.0" y="968.7" font-size="12.8" fill="#3a3a3a" textLength="27.0" lengthAdjust="spacingAndGlyphs">66 %</text>
<text x="61.5" y="1000.7" font-size="14.5" fill="#ffffff" textLength="57.9" lengthAdjust="spacingAndGlyphs">CLP/USD</text>
<text x="61.5" y="1019.9" font-size="14.5" fill="#8ccf8c" textLength="47.8" lengthAdjust="spacingAndGlyphs">+0,77%</text>
<text x="650.5" y="1011.3" font-size="16" fill="#5f5f5f" textLength="48.2" lengthAdjust="spacingAndGlyphs">Buscar</text>
<text x="1603.5" y="1001.4" font-size="14.5" fill="#ffffff" textLength="22.3" lengthAdjust="spacingAndGlyphs">ESP</text>
<text x="1602.0" y="1020.5" font-size="14.5" fill="#ffffff" textLength="25.2" lengthAdjust="spacingAndGlyphs">LAA</text>
<text x="1786.4" y="1000.7" font-size="15" fill="#ffffff" textLength="34.1" lengthAdjust="spacingAndGlyphs">16:15</text>
<text x="1746.9" y="1019.4" font-size="15" fill="#ffffff" textLength="73.6" lengthAdjust="spacingAndGlyphs">23/09/2025</text>
<text x="589.4" y="228.5" font-size="12.5" fill="#454545" text-anchor="middle">16</text>
<text x="619.2" y="228.5" font-size="12.5" fill="#454545" text-anchor="middle">15</text>
<text x="649.1" y="228.5" font-size="12.5" fill="#454545" text-anchor="middle">14</text>
<text x="679.0" y="228.5" font-size="12.5" fill="#454545" text-anchor="middle">13</text>
<text x="708.9" y="228.5" font-size="12.5" fill="#454545" text-anchor="middle">12</text>
<text x="738.8" y="228.5" font-size="12.5" fill="#454545" text-anchor="middle">11</text>
<text x="768.7" y="228.5" font-size="12.5" fill="#454545" text-anchor="middle">10</text>
<text x="798.6" y="228.5" font-size="12.5" fill="#454545" text-anchor="middle">9</text>
<text x="828.5" y="228.5" font-size="12.5" fill="#454545" text-anchor="middle">8</text>
<text x="858.4" y="228.5" font-size="12.5" fill="#454545" text-anchor="middle">7</text>
<text x="888.3" y="228.5" font-size="12.5" fill="#454545" text-anchor="middle">6</text>
<text x="918.1" y="228.5" font-size="12.5" fill="#454545" text-anchor="middle">5</text>
<text x="948.0" y="228.5" font-size="12.5" fill="#454545" text-anchor="middle">4</text>
<text x="977.9" y="228.5" font-size="12.5" fill="#454545" text-anchor="middle">3</text>
<text x="1007.8" y="228.5" font-size="12.5" fill="#454545" text-anchor="middle">2</text>
<text x="1037.7" y="228.5" font-size="12.5" fill="#454545" text-anchor="middle">1</text>
<text x="1067.6" y="228.5" font-size="12.5" fill="#454545" text-anchor="middle">0</text>
<text x="1097.5" y="228.5" font-size="12.5" fill="#454545" text-anchor="middle">1</text>
<text x="1127.4" y="228.5" font-size="12.5" fill="#454545" text-anchor="middle">2</text>
<text x="1157.3" y="228.5" font-size="12.5" fill="#454545" text-anchor="middle">3</text>
<text x="1187.2" y="228.5" font-size="12.5" fill="#454545" text-anchor="middle">4</text>
<text x="1217.0" y="228.5" font-size="12.5" fill="#454545" text-anchor="middle">5</text>
<text x="1246.9" y="228.5" font-size="12.5" fill="#454545" text-anchor="middle">6</text>
<text x="1276.8" y="228.5" font-size="12.5" fill="#454545" text-anchor="middle">7</text>
<text x="1306.7" y="228.5" font-size="12.5" fill="#454545" text-anchor="middle">8</text>
<text x="1336.6" y="228.5" font-size="12.5" fill="#454545" text-anchor="middle">9</text>
<text x="1366.5" y="228.5" font-size="12.5" fill="#454545" text-anchor="middle">10</text>
<text x="1396.4" y="228.5" font-size="12.5" fill="#454545" text-anchor="middle">11</text>
<text x="1426.3" y="228.5" font-size="12.5" fill="#454545" text-anchor="middle">12</text>
<text x="1456.2" y="228.5" font-size="12.5" fill="#454545" text-anchor="middle">13</text>
<text x="1486.1" y="228.5" font-size="12.5" fill="#454545" text-anchor="middle">14</text>
<text x="1515.9" y="228.5" font-size="12.5" fill="#454545" text-anchor="middle">15</text>
<text x="1545.8" y="228.5" font-size="12.5" fill="#454545" text-anchor="middle">16</text>
<rect x="573.9" y="220.5" width="1" height="7" fill="#8a8a8a"/>
<rect x="566.4" y="224" width="1" height="1.5" fill="#a0a0a0"/>
<rect x="581.4" y="224" width="1" height="1.5" fill="#a0a0a0"/>
<rect x="603.8" y="220.5" width="1" height="7" fill="#8a8a8a"/>
<rect x="596.3" y="224" width="1" height="1.5" fill="#a0a0a0"/>
<rect x="611.3" y="224" width="1" height="1.5" fill="#a0a0a0"/>
<rect x="633.7" y="220.5" width="1" height="7" fill="#8a8a8a"/>
<rect x="626.2" y="224" width="1" height="1.5" fill="#a0a0a0"/>
<rect x="641.2" y="224" width="1" height="1.5" fill="#a0a0a0"/>
<rect x="663.6" y="220.5" width="1" height="7" fill="#8a8a8a"/>
<rect x="656.1" y="224" width="1" height="1.5" fill="#a0a0a0"/>
<rect x="671.1" y="224" width="1" height="1.5" fill="#a0a0a0"/>
<rect x="693.5" y="220.5" width="1" height="7" fill="#8a8a8a"/>
<rect x="686.0" y="224" width="1" height="1.5" fill="#a0a0a0"/>
<rect x="700.9" y="224" width="1" height="1.5" fill="#a0a0a0"/>
<rect x="723.4" y="220.5" width="1" height="7" fill="#8a8a8a"/>
<rect x="715.9" y="224" width="1" height="1.5" fill="#a0a0a0"/>
<rect x="730.8" y="224" width="1" height="1.5" fill="#a0a0a0"/>
<rect x="753.3" y="220.5" width="1" height="7" fill="#8a8a8a"/>
<rect x="745.8" y="224" width="1" height="1.5" fill="#a0a0a0"/>
<rect x="760.7" y="224" width="1" height="1.5" fill="#a0a0a0"/>
<rect x="783.1" y="220.5" width="1" height="7" fill="#8a8a8a"/>
<rect x="775.7" y="224" width="1" height="1.5" fill="#a0a0a0"/>
<rect x="790.6" y="224" width="1" height="1.5" fill="#a0a0a0"/>
<rect x="813.0" y="220.5" width="1" height="7" fill="#8a8a8a"/>
<rect x="805.6" y="224" width="1" height="1.5" fill="#a0a0a0"/>
<rect x="820.5" y="224" width="1" height="1.5" fill="#a0a0a0"/>
<rect x="842.9" y="220.5" width="1" height="7" fill="#8a8a8a"/>
<rect x="835.5" y="224" width="1" height="1.5" fill="#a0a0a0"/>
<rect x="850.4" y="224" width="1" height="1.5" fill="#a0a0a0"/>
<rect x="872.8" y="220.5" width="1" height="7" fill="#8a8a8a"/>
<rect x="865.3" y="224" width="1" height="1.5" fill="#a0a0a0"/>
<rect x="880.3" y="224" width="1" height="1.5" fill="#a0a0a0"/>
<rect x="902.7" y="220.5" width="1" height="7" fill="#8a8a8a"/>
<rect x="895.2" y="224" width="1" height="1.5" fill="#a0a0a0"/>
<rect x="910.2" y="224" width="1" height="1.5" fill="#a0a0a0"/>
<rect x="932.6" y="220.5" width="1" height="7" fill="#8a8a8a"/>
<rect x="925.1" y="224" width="1" height="1.5" fill="#a0a0a0"/>
<rect x="940.1" y="224" width="1" height="1.5" fill="#a0a0a0"/>
<rect x="962.5" y="220.5" width="1" height="7" fill="#8a8a8a"/>
<rect x="955.0" y="224" width="1" height="1.5" fill="#a0a0a0"/>
<rect x="970.0" y="224" width="1" height="1.5" fill="#a0a0a0"/>
<rect x="992.4" y="220.5" width="1" height="7" fill="#8a8a8a"/>
<rect x="984.9" y="224" width="1" height="1.5" fill="#a0a0a0"/>
<rect x="999.8" y="224" width="1" height="1.5" fill="#a0a0a0"/>
<rect x="1022.3" y="220.5" width="1" height="7" fill="#8a8a8a"/>
<rect x="1014.8" y="224" width="1" height="1.5" fill="#a0a0a0"/>
<rect x="1029.7" y="224" width="1" height="1.5" fill="#a0a0a0"/>
<rect x="1052.2" y="220.5" width="1" height="7" fill="#8a8a8a"/>
<rect x="1044.7" y="224" width="1" height="1.5" fill="#a0a0a0"/>
<rect x="1059.6" y="224" width="1" height="1.5" fill="#a0a0a0"/>
<rect x="1082.0" y="220.5" width="1" height="7" fill="#8a8a8a"/>
<rect x="1074.6" y="224" width="1" height="1.5" fill="#a0a0a0"/>
<rect x="1089.5" y="224" width="1" height="1.5" fill="#a0a0a0"/>
<rect x="1111.9" y="220.5" width="1" height="7" fill="#8a8a8a"/>
<rect x="1104.5" y="224" width="1" height="1.5" fill="#a0a0a0"/>
<rect x="1119.4" y="224" width="1" height="1.5" fill="#a0a0a0"/>
<rect x="1141.8" y="220.5" width="1" height="7" fill="#8a8a8a"/>
<rect x="1134.4" y="224" width="1" height="1.5" fill="#a0a0a0"/>
<rect x="1149.3" y="224" width="1" height="1.5" fill="#a0a0a0"/>
<rect x="1171.7" y="220.5" width="1" height="7" fill="#8a8a8a"/>
<rect x="1164.2" y="224" width="1" height="1.5" fill="#a0a0a0"/>
<rect x="1179.2" y="224" width="1" height="1.5" fill="#a0a0a0"/>
<rect x="1201.6" y="220.5" width="1" height="7" fill="#8a8a8a"/>
<rect x="1194.1" y="224" width="1" height="1.5" fill="#a0a0a0"/>
<rect x="1209.1" y="224" width="1" height="1.5" fill="#a0a0a0"/>
<rect x="1231.5" y="220.5" width="1" height="7" fill="#8a8a8a"/>
<rect x="1224.0" y="224" width="1" height="1.5" fill="#a0a0a0"/>
<rect x="1239.0" y="224" width="1" height="1.5" fill="#a0a0a0"/>
<rect x="1261.4" y="220.5" width="1" height="7" fill="#8a8a8a"/>
<rect x="1253.9" y="224" width="1" height="1.5" fill="#a0a0a0"/>
<rect x="1268.9" y="224" width="1" height="1.5" fill="#a0a0a0"/>
<rect x="1291.3" y="220.5" width="1" height="7" fill="#8a8a8a"/>
<rect x="1283.8" y="224" width="1" height="1.5" fill="#a0a0a0"/>
<rect x="1298.7" y="224" width="1" height="1.5" fill="#a0a0a0"/>
<rect x="1321.2" y="220.5" width="1" height="7" fill="#8a8a8a"/>
<rect x="1313.7" y="224" width="1" height="1.5" fill="#a0a0a0"/>
<rect x="1328.6" y="224" width="1" height="1.5" fill="#a0a0a0"/>
<rect x="1351.1" y="220.5" width="1" height="7" fill="#8a8a8a"/>
<rect x="1343.6" y="224" width="1" height="1.5" fill="#a0a0a0"/>
<rect x="1358.5" y="224" width="1" height="1.5" fill="#a0a0a0"/>
<rect x="1380.9" y="220.5" width="1" height="7" fill="#8a8a8a"/>
<rect x="1373.5" y="224" width="1" height="1.5" fill="#a0a0a0"/>
<rect x="1388.4" y="224" width="1" height="1.5" fill="#a0a0a0"/>
<rect x="1410.8" y="220.5" width="1" height="7" fill="#8a8a8a"/>
<rect x="1403.4" y="224" width="1" height="1.5" fill="#a0a0a0"/>
<rect x="1418.3" y="224" width="1" height="1.5" fill="#a0a0a0"/>
<rect x="1440.7" y="220.5" width="1" height="7" fill="#8a8a8a"/>
<rect x="1433.3" y="224" width="1" height="1.5" fill="#a0a0a0"/>
<rect x="1448.2" y="224" width="1" height="1.5" fill="#a0a0a0"/>
<rect x="1470.6" y="220.5" width="1" height="7" fill="#8a8a8a"/>
<rect x="1463.1" y="224" width="1" height="1.5" fill="#a0a0a0"/>
<rect x="1478.1" y="224" width="1" height="1.5" fill="#a0a0a0"/>
<rect x="1500.5" y="220.5" width="1" height="7" fill="#8a8a8a"/>
<rect x="1493.0" y="224" width="1" height="1.5" fill="#a0a0a0"/>
<rect x="1508.0" y="224" width="1" height="1.5" fill="#a0a0a0"/>
<rect x="1530.4" y="220.5" width="1" height="7" fill="#8a8a8a"/>
<rect x="1522.9" y="224" width="1" height="1.5" fill="#a0a0a0"/>
<rect x="1537.9" y="224" width="1" height="1.5" fill="#a0a0a0"/>
<rect x="1560.3" y="220.5" width="1" height="7" fill="#8a8a8a"/>
<rect x="1552.8" y="224" width="1" height="1.5" fill="#a0a0a0"/>
<rect x="1567.8" y="224" width="1" height="1.5" fill="#a0a0a0"/>
<text x="0" y="0" font-size="12.5" fill="#454545" text-anchor="middle" transform="translate(298.5 311.6) rotate(-90)">9</text>
<text x="0" y="0" font-size="12.5" fill="#454545" text-anchor="middle" transform="translate(298.5 341.5) rotate(-90)">8</text>
<text x="0" y="0" font-size="12.5" fill="#454545" text-anchor="middle" transform="translate(298.5 371.3) rotate(-90)">7</text>
<text x="0" y="0" font-size="12.5" fill="#454545" text-anchor="middle" transform="translate(298.5 401.2) rotate(-90)">6</text>
<text x="0" y="0" font-size="12.5" fill="#454545" text-anchor="middle" transform="translate(298.5 431.0) rotate(-90)">5</text>
<text x="0" y="0" font-size="12.5" fill="#454545" text-anchor="middle" transform="translate(298.5 460.9) rotate(-90)">4</text>
<text x="0" y="0" font-size="12.5" fill="#454545" text-anchor="middle" transform="translate(298.5 490.7) rotate(-90)">3</text>
<text x="0" y="0" font-size="12.5" fill="#454545" text-anchor="middle" transform="translate(298.5 520.6) rotate(-90)">2</text>
<text x="0" y="0" font-size="12.5" fill="#454545" text-anchor="middle" transform="translate(298.5 550.4) rotate(-90)">1</text>
<text x="0" y="0" font-size="12.5" fill="#454545" text-anchor="middle" transform="translate(298.5 580.3) rotate(-90)">0</text>
<text x="0" y="0" font-size="12.5" fill="#454545" text-anchor="middle" transform="translate(298.5 610.1) rotate(-90)">1</text>
<text x="0" y="0" font-size="12.5" fill="#454545" text-anchor="middle" transform="translate(298.5 640.0) rotate(-90)">2</text>
<text x="0" y="0" font-size="12.5" fill="#454545" text-anchor="middle" transform="translate(298.5 669.8) rotate(-90)">3</text>
<text x="0" y="0" font-size="12.5" fill="#454545" text-anchor="middle" transform="translate(298.5 699.7) rotate(-90)">4</text>
<text x="0" y="0" font-size="12.5" fill="#454545" text-anchor="middle" transform="translate(298.5 729.5) rotate(-90)">5</text>
<text x="0" y="0" font-size="12.5" fill="#454545" text-anchor="middle" transform="translate(298.5 759.4) rotate(-90)">6</text>
<text x="0" y="0" font-size="12.5" fill="#454545" text-anchor="middle" transform="translate(298.5 789.2) rotate(-90)">7</text>
<text x="0" y="0" font-size="12.5" fill="#454545" text-anchor="middle" transform="translate(298.5 819.1) rotate(-90)">8</text>
<text x="0" y="0" font-size="12.5" fill="#454545" text-anchor="middle" transform="translate(298.5 849.0) rotate(-90)">9</text>
<rect x="293.5" y="303.7" width="1.5" height="1" fill="#a0a0a0"/>
<rect x="290.5" y="326.1" width="7" height="1" fill="#8a8a8a"/>
<rect x="293.5" y="318.6" width="1.5" height="1" fill="#a0a0a0"/>
<rect x="293.5" y="333.5" width="1.5" height="1" fill="#a0a0a0"/>
<rect x="290.5" y="355.9" width="7" height="1" fill="#8a8a8a"/>
<rect x="293.5" y="348.5" width="1.5" height="1" fill="#a0a0a0"/>
<rect x="293.5" y="363.4" width="1.5" height="1" fill="#a0a0a0"/>
<rect x="290.5" y="385.8" width="7" height="1" fill="#8a8a8a"/>
<rect x="293.5" y="378.3" width="1.5" height="1" fill="#a0a0a0"/>
<rect x="293.5" y="393.2" width="1.5" height="1" fill="#a0a0a0"/>
<rect x="290.5" y="415.6" width="7" height="1" fill="#8a8a8a"/>
<rect x="293.5" y="408.2" width="1.5" height="1" fill="#a0a0a0"/>
<rect x="293.5" y="423.1" width="1.5" height="1" fill="#a0a0a0"/>
<rect x="290.5" y="445.5" width="7" height="1" fill="#8a8a8a"/>
<rect x="293.5" y="438.0" width="1.5" height="1" fill="#a0a0a0"/>
<rect x="293.5" y="452.9" width="1.5" height="1" fill="#a0a0a0"/>
<rect x="290.5" y="475.3" width="7" height="1" fill="#8a8a8a"/>
<rect x="293.5" y="467.9" width="1.5" height="1" fill="#a0a0a0"/>
<rect x="293.5" y="482.8" width="1.5" height="1" fill="#a0a0a0"/>
<rect x="290.5" y="505.2" width="7" height="1" fill="#8a8a8a"/>
<rect x="293.5" y="497.7" width="1.5" height="1" fill="#a0a0a0"/>
<rect x="293.5" y="512.6" width="1.5" height="1" fill="#a0a0a0"/>
<rect x="290.5" y="535.0" width="7" height="1" fill="#8a8a8a"/>
<rect x="293.5" y="527.6" width="1.5" height="1" fill="#a0a0a0"/>
<rect x="293.5" y="542.5" width="1.5" height="1" fill="#a0a0a0"/>
<rect x="290.5" y="564.9" width="7" height="1" fill="#8a8a8a"/>
<rect x="293.5" y="557.4" width="1.5" height="1" fill="#a0a0a0"/>
<rect x="293.5" y="572.3" width="1.5" height="1" fill="#a0a0a0"/>
<rect x="290.5" y="594.7" width="7" height="1" fill="#8a8a8a"/>
<rect x="293.5" y="587.3" width="1.5" height="1" fill="#a0a0a0"/>
<rect x="293.5" y="602.2" width="1.5" height="1" fill="#a0a0a0"/>
<rect x="290.5" y="624.6" width="7" height="1" fill="#8a8a8a"/>
<rect x="293.5" y="617.1" width="1.5" height="1" fill="#a0a0a0"/>
<rect x="293.5" y="632.0" width="1.5" height="1" fill="#a0a0a0"/>
<rect x="290.5" y="654.4" width="7" height="1" fill="#8a8a8a"/>
<rect x="293.5" y="647.0" width="1.5" height="1" fill="#a0a0a0"/>
<rect x="293.5" y="661.9" width="1.5" height="1" fill="#a0a0a0"/>
<rect x="290.5" y="684.3" width="7" height="1" fill="#8a8a8a"/>
<rect x="293.5" y="676.8" width="1.5" height="1" fill="#a0a0a0"/>
<rect x="293.5" y="691.7" width="1.5" height="1" fill="#a0a0a0"/>
<rect x="290.5" y="714.1" width="7" height="1" fill="#8a8a8a"/>
<rect x="293.5" y="706.7" width="1.5" height="1" fill="#a0a0a0"/>
<rect x="293.5" y="721.6" width="1.5" height="1" fill="#a0a0a0"/>
<rect x="290.5" y="744.0" width="7" height="1" fill="#8a8a8a"/>
<rect x="293.5" y="736.5" width="1.5" height="1" fill="#a0a0a0"/>
<rect x="293.5" y="751.4" width="1.5" height="1" fill="#a0a0a0"/>
<rect x="290.5" y="773.8" width="7" height="1" fill="#8a8a8a"/>
<rect x="293.5" y="766.4" width="1.5" height="1" fill="#a0a0a0"/>
<rect x="293.5" y="781.3" width="1.5" height="1" fill="#a0a0a0"/>
<rect x="290.5" y="803.7" width="7" height="1" fill="#8a8a8a"/>
<rect x="293.5" y="796.2" width="1.5" height="1" fill="#a0a0a0"/>
<rect x="293.5" y="811.1" width="1.5" height="1" fill="#a0a0a0"/>
<rect x="290.5" y="833.5" width="7" height="1" fill="#8a8a8a"/>
<rect x="293.5" y="826.1" width="1.5" height="1" fill="#a0a0a0"/>
<rect x="293.5" y="841.0" width="1.5" height="1" fill="#a0a0a0"/>
<rect x="293.5" y="855.9" width="1.5" height="1" fill="#a0a0a0"/>
</svg>
</body></html>
